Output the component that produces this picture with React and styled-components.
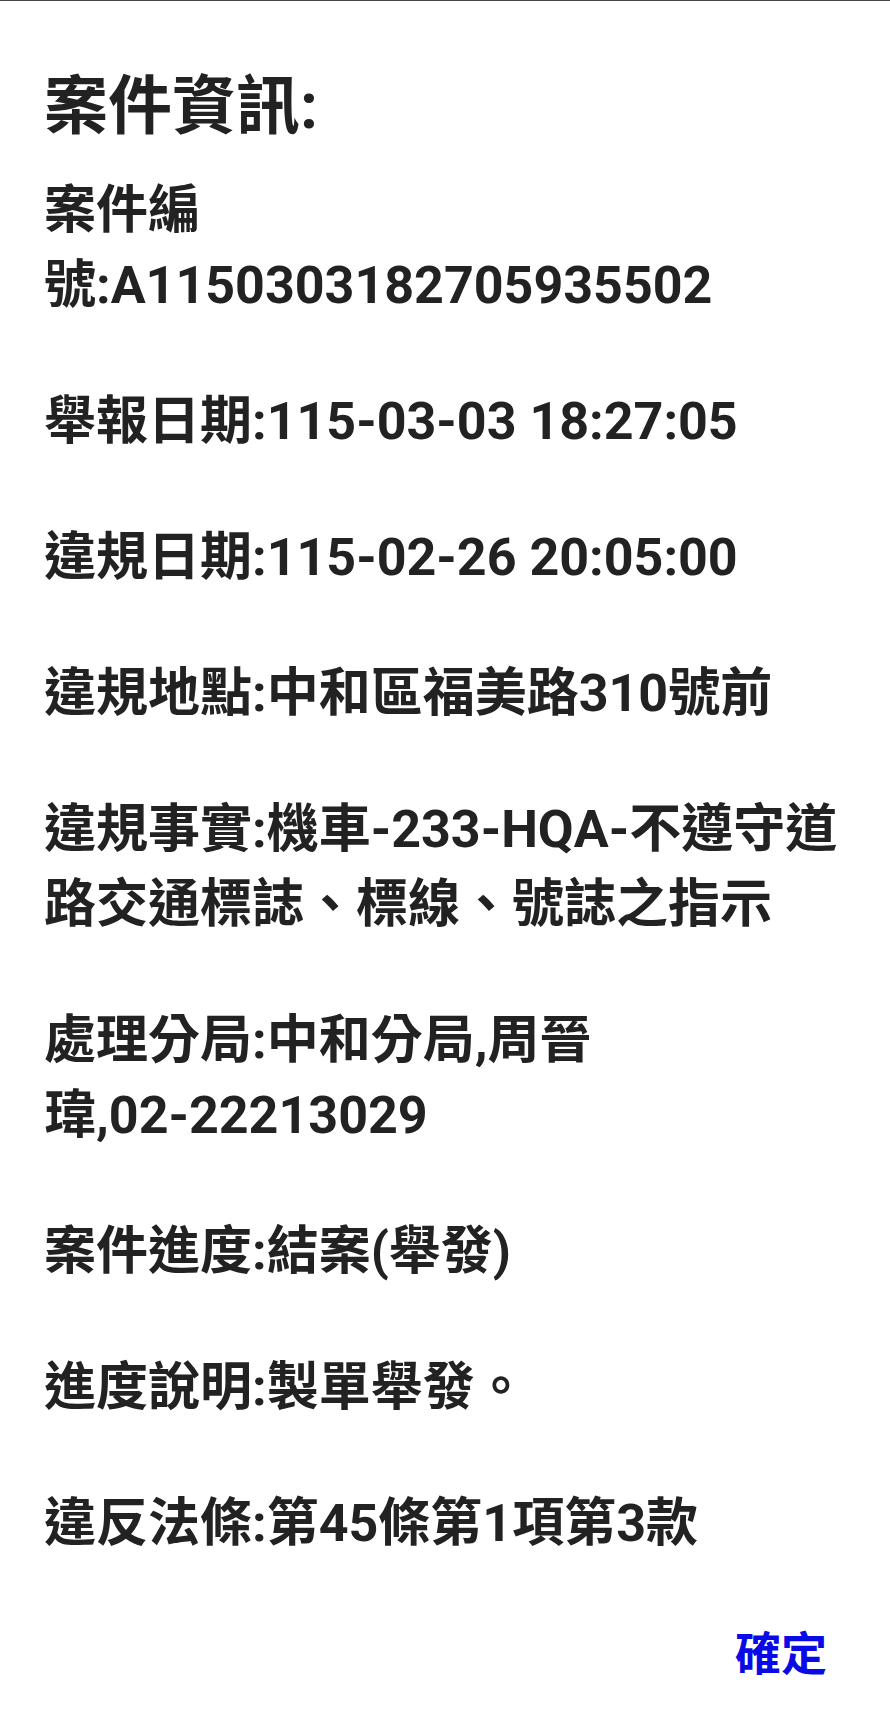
import React from 'react';
import styled, { createGlobalStyle } from 'styled-components';

const GlobalStyle = createGlobalStyle`
	html, body {
		margin: 0;
		padding: 0;
		background: #ffffff;
	}
	body {
		font-family: Roboto, "Noto Sans CJK TC", "Noto Sans CJK SC", sans-serif;
	}
`

const Dialog = styled.div`
	box-sizing: border-box;
	min-height: 100vh;
	background: #ffffff;
	border-top: 1px solid #444444;
	padding: 62px 44px 40px;
	display: flex;
	flex-direction: column;
	color: #222222;
`

const Title = styled.h2`
	margin: 0 0 22px;
	font-size: 64px;
	line-height: 88px;
	font-weight: 700;
`

const InfoList = styled.div`
	display: flex;
	flex-direction: column;
	gap: 61px;
`

const InfoRow = styled.p`
	margin: 0;
	font-size: 52px;
	line-height: 75px;
	font-weight: 700;
`

const NoBreak = styled.span`
	white-space: nowrap;
`

const Actions = styled.div`
	display: flex;
	justify-content: flex-end;
	margin-top: 63px;
`

const ConfirmButton = styled.button`
	border: none;
	background: transparent;
	padding: 0 19px 0 0;
	font-family: inherit;
	font-size: 46px;
	line-height: 60px;
	font-weight: 700;
	color: #0a0ae6;
	cursor: pointer;
`

const rows = [
	{ text: '案件編號:A1150303182705935502' },
	{ text: '舉報日期:115-03-03 18:27:05' },
	{ text: '違規日期:115-02-26 20:05:00' },
	{ text: '違規地點:中和區福美路310號前' },
	{ text: '違規事實:機車-233-HQA-不遵守道路交通標誌、標線、號誌之指示' },
	{ text: '處理分局:中和分局,周晉', tail: '瑋,02-22213029' },
	{ text: '案件進度:結案(舉發)' },
	{ text: '進度說明:製單舉發。' },
	{ text: '違反法條:第45條第1項第3款' },
]

const App = () => {
	return (
		<>
			<GlobalStyle />
			<Dialog>
				<Title>案件資訊:</Title>
				<InfoList>
					{rows.map((row, idx) => (
						<InfoRow key={idx}>
							{row.text}
							{row.tail && <NoBreak>{row.tail}</NoBreak>}
						</InfoRow>
					))}
				</InfoList>
				<Actions>
					<ConfirmButton>確定</ConfirmButton>
				</Actions>
			</Dialog>
		</>
	)
}

export default App;
